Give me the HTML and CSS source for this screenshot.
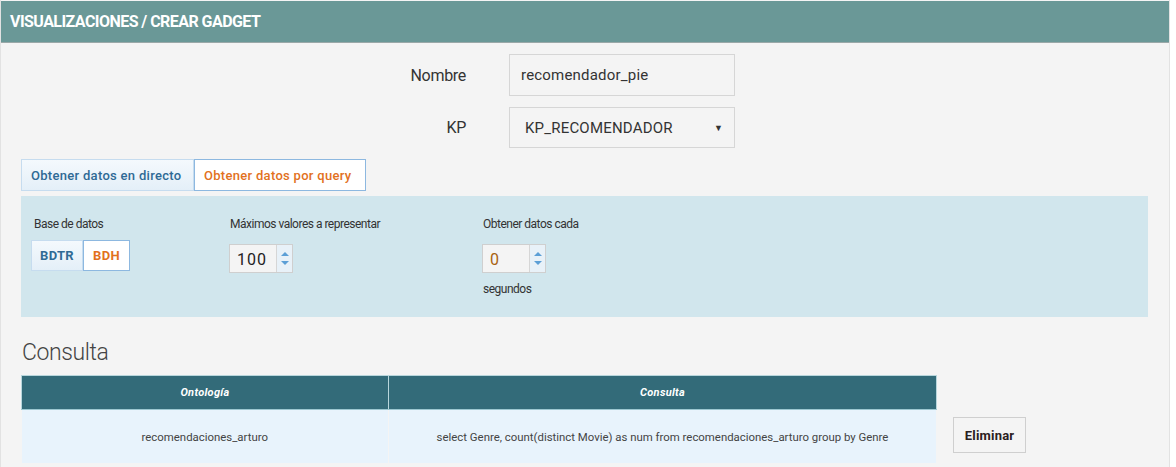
FILE: index.html
```html
<!DOCTYPE html>
<html lang="es">
<head>
<meta charset="utf-8">
<title>Crear gadget</title>
<link rel="stylesheet" href="styles.css">
</head>
<body>
<div class="page">
  <header class="topbar">VISUALIZACIONES / CREAR GADGET</header>
  <main class="content">
    <div class="form-row">
      <label class="form-label">Nombre</label>
      <div class="field">recomendador_pie</div>
    </div>
    <div class="form-row">
      <label class="form-label">KP</label>
      <div class="field select">KP_RECOMENDADOR<span class="caret">&#9660;</span></div>
    </div>

    <div class="tabs">
      <div class="tab">Obtener datos en directo</div>
      <div class="tab active">Obtener datos por query</div>
    </div>

    <section class="panel">
      <div class="col col-db">
        <div class="small-label">Base de datos</div>
        <div class="btn-group">
          <span class="seg">BDTR</span><span class="seg active">BDH</span>
        </div>
      </div>
      <div class="col col-max">
        <div class="small-label">Máximos valores a representar</div>
        <div class="spinner">
          <span class="spin-val">100</span>
          <span class="spin-arrows"><span class="up"></span><span class="down"></span></span>
        </div>
      </div>
      <div class="col col-each">
        <div class="small-label">Obtener datos cada</div>
        <div class="spinner">
          <span class="spin-val orange">0</span>
          <span class="spin-arrows"><span class="up"></span><span class="down"></span></span>
        </div>
        <div class="small-label unit">segundos</div>
      </div>
    </section>

    <h2 class="section-title">Consulta</h2>

    <div class="table-row">
      <table class="grid">
        <thead>
          <tr><th class="c1">Ontología</th><th class="c2">Consulta</th></tr>
        </thead>
        <tbody>
          <tr><td>recomendaciones_arturo</td><td>select Genre, count(distinct Movie) as num from recomendaciones_arturo group by Genre</td></tr>
        </tbody>
      </table>
      <button class="btn-del">Eliminar</button>
    </div>
  </main>
</div>
</body>
</html>
```
FILE: styles.css
```css
html, body {
  margin: 0;
  padding: 0;
  background: #ffffff;
  font-family: Roboto, "Noto Sans", sans-serif;
}
.page {
  width: 1168px;
  height: 467px;
  border-left: 1px solid #e2e2e2;
  border-right: 1px solid #e2e2e2;
  background: #f4f4f4;
  overflow: hidden;
}
.topbar {
  margin-top: 1px;
  height: 42px;
  box-sizing: border-box;
  background: #6a9897;
  border-bottom: 1px solid #9aa8a8;
  color: #fff;
  font-weight: 700;
  font-size: 16px;
  letter-spacing: -0.55px;
  padding: 12px 0 0 9px;
  line-height: 17px;
}
.content {
  padding: 11px 0 0 20px;
}
.form-row {
  display: flex;
  align-items: center;
  margin-bottom: 11px;
}
.form-label {
  width: 445px;
  text-align: right;
  font-size: 16px;
  color: #333;
  margin-right: 43px;
  letter-spacing: -0.3px;
}
.field {
  width: 226px;
  height: 42px;
  box-sizing: border-box;
  border: 1px solid #d6d6d6;
  background: #f4f4f4;
  padding: 0 11px;
  display: flex;
  align-items: center;
  font-size: 15px;
  letter-spacing: 0.2px;
  color: #333;
}
.field.select {
  height: 41px;
  padding-left: 15px;
  justify-content: space-between;
}
.caret {
  font-size: 9px;
  color: #333;
}
.tabs {
  display: flex;
  margin-top: 1px;
}
.tab {
  height: 32px;
  box-sizing: border-box;
  padding: 0 0 0 9px;
  display: flex;
  align-items: center;
  white-space: nowrap;
  font-size: 13px;
  font-weight: 500;
  letter-spacing: 0.3px;
  color: #2f6a95;
  background: linear-gradient(#f4f9fd, #e4eff8);
  border: 1px solid #c6dcef;
  width: 173px;
}
.tab.active {
  background: #fff;
  color: #e2711d;
  border-color: #8db8e0;
  width: 172px;
}
.panel {
  margin-top: 5px;
  width: 1127px;
  height: 121px;
  box-sizing: border-box;
  background: #d1e6ed;
  display: flex;
  padding: 21px 0 0 10px;
}
.col-db { width: 198px; }
.col-max { width: 253px; }
.small-label {
  font-size: 12px;
  color: #333;
  letter-spacing: -0.5px;
  padding-left: 3px;
  line-height: 14px;
}
.col-max .small-label { padding-left: 1px; }
.small-label.unit { margin-top: 9px; padding-left: 1px; }
.col-each .small-label:first-child { padding-left: 1px; }
.btn-group {
  display: flex;
  margin-top: 9px;
}
.seg {
  height: 31px;
  box-sizing: border-box;
  display: inline-flex;
  align-items: center;
  justify-content: center;
  font-size: 13px;
  font-weight: 700;
  letter-spacing: 0.3px;
  color: #2f6a95;
  background: linear-gradient(#f4f9fd, #e4eff8);
  border: 1px solid #c6dcef;
  width: 52px;
}
.seg.active {
  background: #fff;
  color: #e2711d;
  border-color: #8db8e0;
  width: 47px;
}
.spinner {
  margin-top: 13px;
  display: flex;
  width: 64px;
  height: 29px;
  box-sizing: border-box;
  border: 1px solid #cfcfcf;
  background: #f4f4f4;
}
.spin-val {
  flex: 1;
  display: flex;
  align-items: center;
  padding-left: 7px;
  padding-top: 2px;
  font-size: 16px;
  letter-spacing: 1px;
  color: #222;
  border-right: 1px solid #d6d6d6;
}
.spin-val.orange { color: #a8620f; }
.spin-arrows {
  width: 15px;
  display: flex;
  flex-direction: column;
  align-items: center;
  justify-content: center;
  gap: 5px;
  background: #e8f1f8;
}
.up, .down {
  width: 0;
  height: 0;
  border-left: 4px solid transparent;
  border-right: 4px solid transparent;
}
.up { border-bottom: 4px solid #5c9fd6; }
.down { border-top: 4px solid #5c9fd6; }
.section-title {
  margin: 22px 0 0 1px;
  font-size: 23px;
  font-weight: 300;
  color: #444;
  line-height: 28px;
  letter-spacing: -0.4px;
}
.table-row {
  display: flex;
  align-items: flex-start;
  margin-top: 8px;
}
.grid {
  border-collapse: collapse;
  width: 916px;
  font-size: 11.4px;
}
.grid th {
  background: #336b79;
  color: #fff;
  font-style: italic;
  font-weight: 700;
  font-size: 11px;
  letter-spacing: 0.3px;
  height: 33px;
  padding: 0;
  border: 1px solid #b8d6dc;
  border-bottom: 1px solid #9cc7d0;
}
.grid th.c1 { width: 366px; }
.grid td {
  background: #e8f3fc;
  color: #444;
  text-align: center;
  height: 53px;
  padding: 0;
  border-right: 1px solid #f4f4f4;
}
.btn-del {
  margin: 42px 0 0 16px;
  width: 73px;
  height: 36px;
  border: 1px solid #cfcfcf;
  background: #f4f4f4;
  font-family: inherit;
  font-weight: 700;
  font-size: 13px;
  letter-spacing: 0.2px;
  color: #2a2020;
  padding: 0;
}
```
